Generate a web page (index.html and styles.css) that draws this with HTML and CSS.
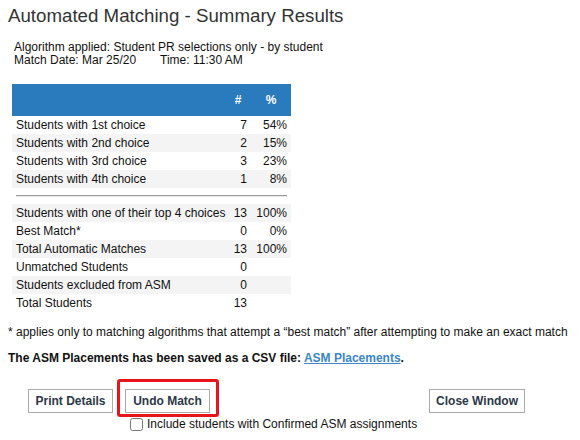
FILE: index.html
```html
<!DOCTYPE html>
<html>
<head>
<meta charset="utf-8">
<link rel="stylesheet" href="styles.css">
</head>
<body>
<div class="page">
  <h1 class="title">Automated Matching - Summary Results</h1>
  <div class="info">
    <div>Algorithm applied: Student PR selections only - by student</div>
    <div>Match Date: Mar 25/20<span class="time">Time: 11:30 AM</span></div>
  </div>
  <div class="summary">
    <table class="stats">
      <colgroup><col class="c-label"><col class="c-num"><col class="c-pct"></colgroup>
      <thead>
        <tr class="head"><th></th><th>#</th><th>%</th></tr>
      </thead>
      <tbody>
        <tr><td>Students with 1st choice</td><td class="n">7</td><td class="n">54%</td></tr>
        <tr class="alt"><td>Students with 2nd choice</td><td class="n">2</td><td class="n">15%</td></tr>
        <tr><td>Students with 3rd choice</td><td class="n">3</td><td class="n">23%</td></tr>
        <tr class="alt"><td>Students with 4th choice</td><td class="n">1</td><td class="n">8%</td></tr>
      </tbody>
    </table>
    <div class="sep"></div>
    <table class="stats">
      <colgroup><col class="c-label"><col class="c-num"><col class="c-pct"></colgroup>
      <tbody>
        <tr class="alt"><td>Students with one of their top 4 choices</td><td class="n">13</td><td class="n">100%</td></tr>
        <tr><td>Best Match*</td><td class="n">0</td><td class="n">0%</td></tr>
        <tr class="alt"><td>Total Automatic Matches</td><td class="n">13</td><td class="n">100%</td></tr>
        <tr><td>Unmatched Students</td><td class="n">0</td><td class="n"></td></tr>
        <tr class="alt"><td>Students excluded from ASM</td><td class="n">0</td><td class="n"></td></tr>
        <tr><td>Total Students</td><td class="n">13</td><td class="n"></td></tr>
      </tbody>
    </table>
  </div>
  <p class="note">* applies only to matching algorithms that attempt a “best match” after attempting to make an exact match</p>
  <p class="saved">The ASM Placements has been saved as a CSV file: <a href="#" class="link">ASM Placements</a>.</p>
  <div class="actions">
    <button class="btn">Print Details</button>
    <div class="undo-group">
      <div class="undo-wrap">
        <button class="btn">Undo Match</button>
        <span class="highlight"></span>
      </div>
      <label class="check"><input type="checkbox" class="box"><span>Include students with Confirmed ASM assignments</span></label>
    </div>
    <button class="btn close">Close Window</button>
  </div>
</div>
</body>
</html>
```

FILE: styles.css
```css
* { box-sizing: border-box; }
html, body { margin: 0; padding: 0; background: #fff; }
body {
  font-family: "Liberation Sans", Arial, sans-serif;
  font-size: 12px;
  color: #222;
  width: 580px;
  height: 440px;
  overflow: hidden;
}
.page { padding: 0 8px; }
.title {
  margin: 3px 0 0 0;
  font-size: 18.7px;
  line-height: 25px;
  font-weight: normal;
  color: #333;
}
.info {
  margin: 13px 0 0 6px;
  line-height: 13px;
  color: #111;
}
.time { margin-left: 24px; }
.summary {
  margin: 17px 0 0 4px;
  width: 279px;
}
.stats {
  width: 279px;
  border-collapse: collapse;
  table-layout: fixed;
}
.c-label { width: 213px; }
.c-num { width: 26px; }
.c-pct { width: 40px; }
.head { background: #2a7abe; height: 32px; }
.head th {
  color: #fff;
  font-weight: bold;
  text-align: center;
  padding: 0;
  height: 32px;
}
.stats td {
  height: 18px;
  padding: 0 4px;
  line-height: 18px;
  white-space: nowrap;
  color: #111;
}
.stats td.n { text-align: right; }
.stats td:nth-child(2) { padding: 0 4px 0 0; }
.alt { background: #f4f4f4; }
.sep {
  margin: 7px 4px 7px 4px;
  border-top: 1px solid #9a9a9a;
  border-bottom: 1px solid #e6e6e6;
}
.note {
  margin: 13px 0 0 0;
  line-height: 14px;
  color: #111;
}
.saved {
  margin: 12px 0 0 0;
  line-height: 14px;
  font-weight: bold;
  color: #111;
}
.link { color: #3a86c8; text-decoration: underline; }
.actions {
  display: flex;
  align-items: flex-start;
  margin: 24px 47px 0 20px;
}
.btn {
  height: 24px;
  min-width: 85px;
  padding: 0 6px;
  background: #fff;
  border: 1px solid #aaa;
  border-radius: 0;
  font-family: "Liberation Sans", Arial, sans-serif;
  font-size: 12px;
  font-weight: bold;
  color: #2c3848;
}
.undo-group {
  display: flex;
  flex-direction: column;
  margin-left: 12px;
}
.undo-wrap { position: relative; }
.highlight {
  position: absolute;
  left: -8px;
  top: -10px;
  width: 102px;
  height: 38px;
  border: 3px solid #e8141c;
  border-radius: 3px;
}
.check {
  display: flex;
  align-items: center;
  margin: 5px 0 0 5px;
  white-space: nowrap;
  line-height: 13px;
  color: #111;
}
.box { width: 13px; height: 13px; margin: 0 4px 0 0; }
.close { margin-left: auto; }
```
